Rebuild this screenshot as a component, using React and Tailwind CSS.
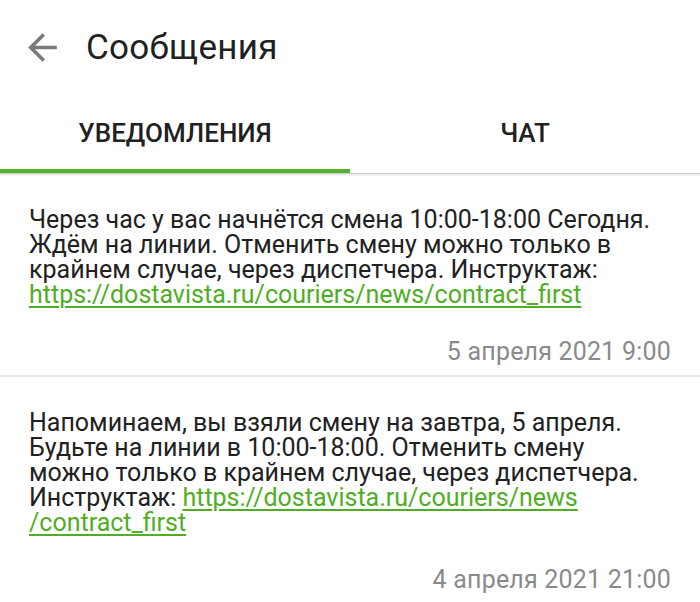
import React from "react";

const URL_A = "https://dostavista.ru/couriers/news";
const URL_B = "/contract_first";

function Link({ children }) {
  return (
    <a className="text-[#4fae24] underline underline-offset-[3px] decoration-[1.5px]" href="#">
      {children}
    </a>
  );
}

const messages = [
  {
    lines: [
      "Через час у вас начнётся смена 10:00-18:00 Сегодня.",
      "Ждём на линии. Отменить смену можно только в",
      "крайнем случае, через диспетчера. Инструктаж:",
      <Link>{URL_A + URL_B}</Link>,
    ],
    date: "5 апреля 2021 9:00",
  },
  {
    lines: [
      "Напоминаем, вы взяли смену на завтра, 5 апреля.",
      "Будьте на линии в 10:00-18:00. Отменить смену",
      "можно только в крайнем случае, через диспетчера.",
      <>
        Инструктаж: <Link>{URL_A}</Link>
      </>,
      <Link>{URL_B}</Link>,
    ],
    date: "4 апреля 2021 21:00",
  },
];

export default function App() {
  return (
    <div className="w-[700px] h-[602px] bg-white overflow-hidden" style={{ fontFamily: "Roboto, 'Noto Sans', sans-serif" }}>
      {/* Header */}
      <div className="h-[94px] flex items-center pl-[21px]">
        <svg width="43" height="43" viewBox="0 0 24 24" fill="#7a7a7a">
          <path d="M20 11H7.83l5.59-5.59L12 4l-8 8 8 8 1.41-1.41L7.83 13H20v-2z" />
        </svg>
        <h1 className="ml-[22px] text-[35px] tracking-[0.3px] text-[#212121] leading-none">Сообщения</h1>
      </div>

      {/* Tabs */}
      <div className="relative flex h-[80px] border-b border-[#cfcfcf] shadow-[0_1px_2px_rgba(0,0,0,0.12)]">
        <div className="flex-1 flex items-center justify-center pb-[1px] text-[26px] font-medium text-[#212121]">
          УВЕДОМЛЕНИЯ
        </div>
        <div className="flex-1 flex items-center justify-center pb-[1px] text-[26px] font-medium text-[#212121]">
          ЧАТ
        </div>
        <div className="absolute left-0 bottom-0 w-1/2 h-[4px] bg-[#56b22a]" />
      </div>

      {/* Messages */}
      {messages.map((m, i) => (
        <div key={i} className={`px-[29px] pt-[33px] pb-[11px] ${i === 0 ? "border-b-2 border-[#ebebeb]" : ""}`}>
          <div className="text-[25px] leading-[25px] text-[#212121]">
            {m.lines.map((line, j) => (
              <div key={j} className="whitespace-nowrap">
                {line}
              </div>
            ))}
          </div>
          <p className="mt-[32px] text-right text-[25px] leading-[25px] text-[#8a8a8a] tracking-[0.2px]">
            {m.date}
          </p>
        </div>
      ))}
    </div>
  );
}
